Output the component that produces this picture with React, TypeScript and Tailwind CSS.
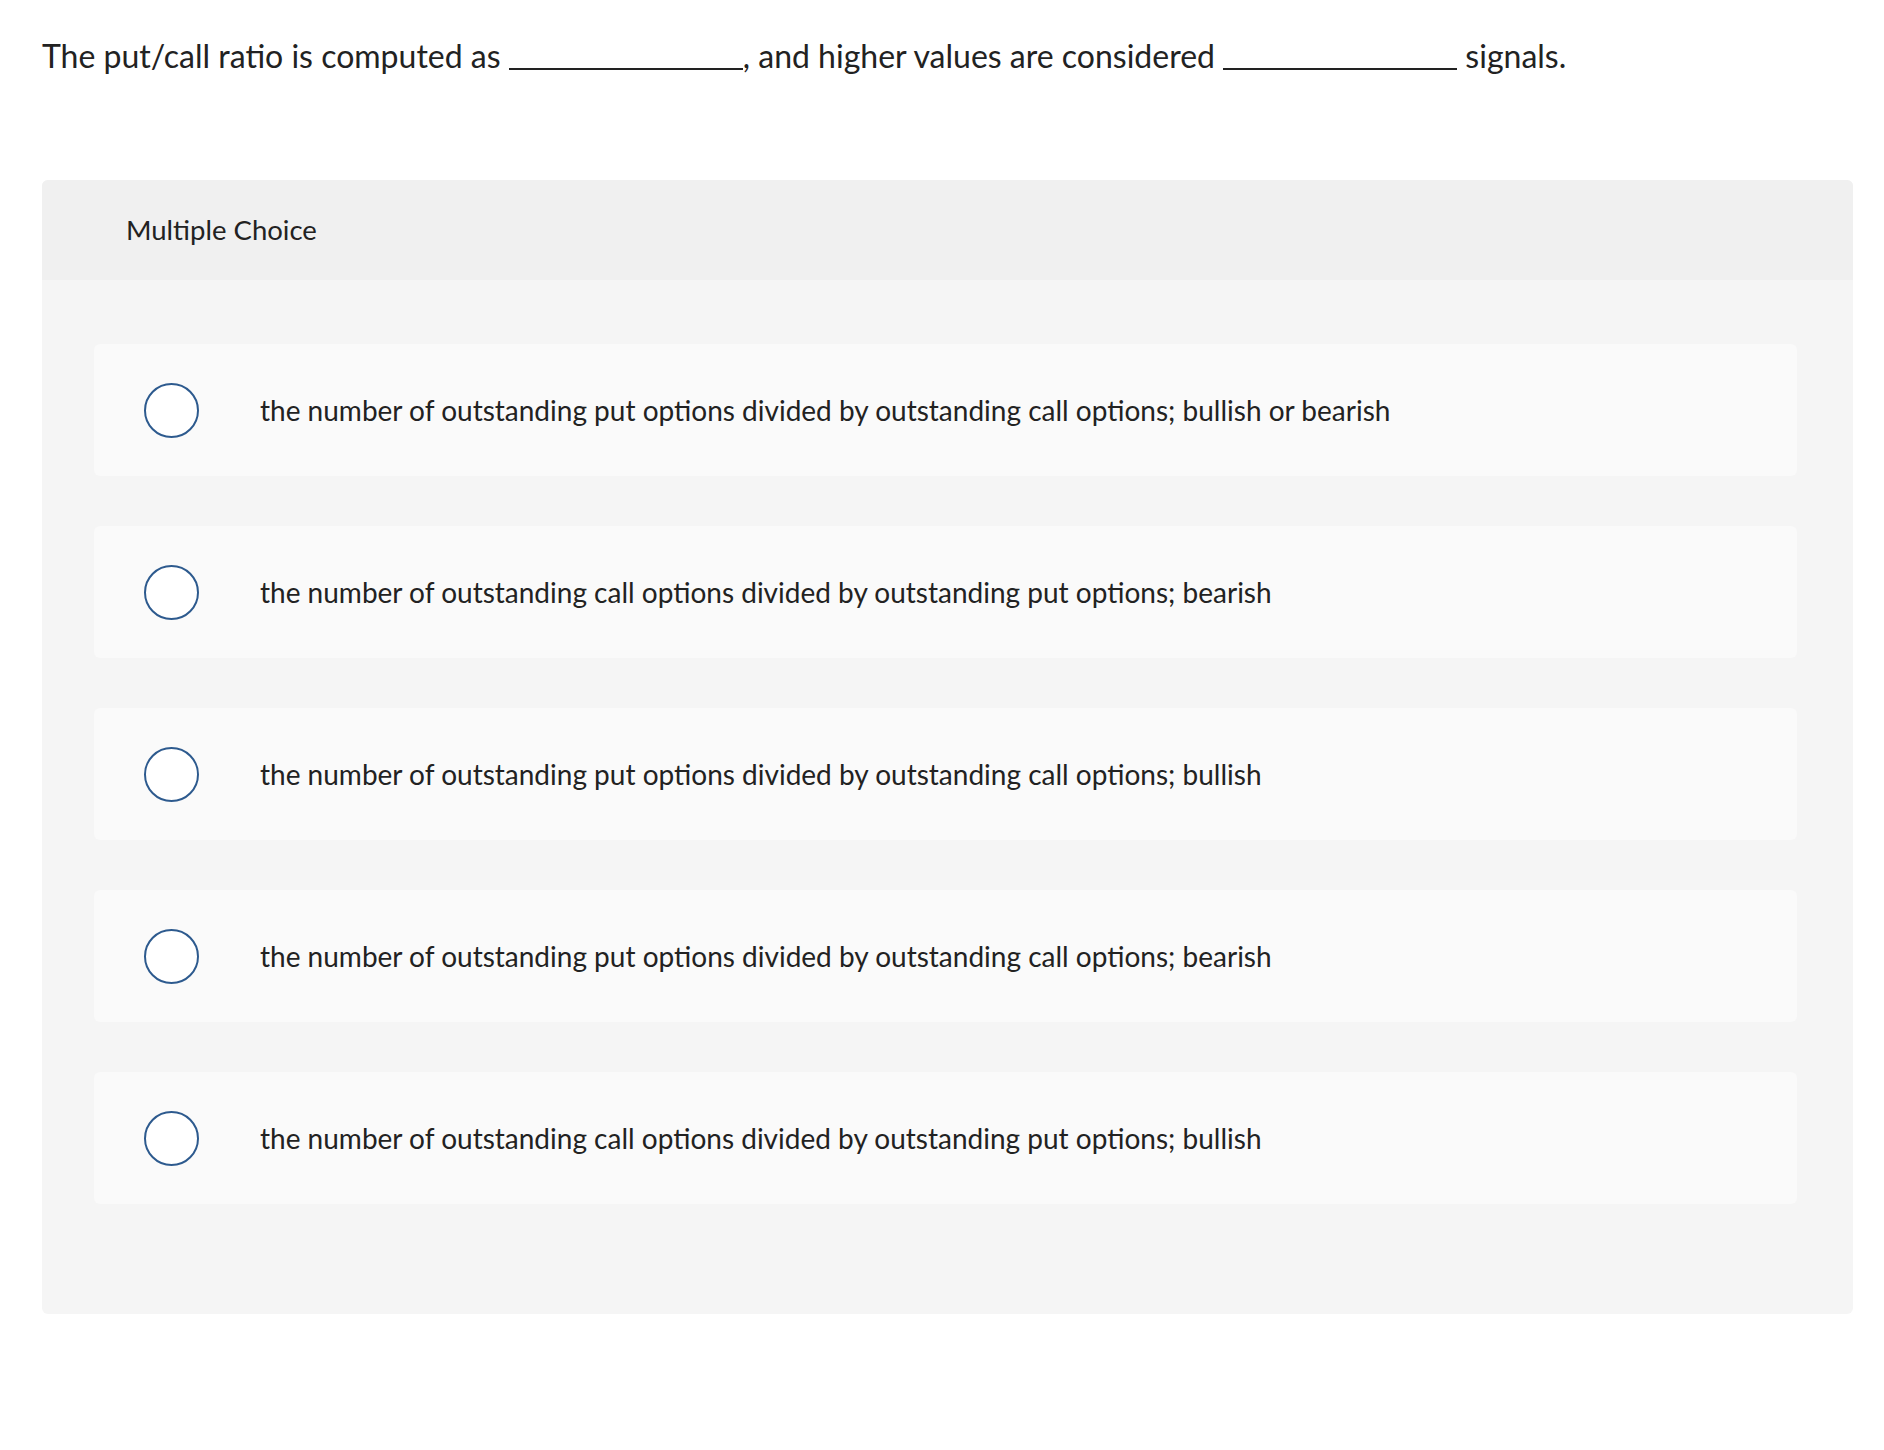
const options = [
    "the number of outstanding put options divided by outstanding call options; bullish or bearish",
    "the number of outstanding call options divided by outstanding put options; bearish",
    "the number of outstanding put options divided by outstanding call options; bullish",
    "the number of outstanding put options divided by outstanding call options; bearish",
    "the number of outstanding call options divided by outstanding put options; bullish",
];

// answer blank, drawn like a run of underscores sitting on the baseline
const Blank: React.FC = () => (
    <span className="inline-block w-[234px] h-[2px] bg-[#222] align-baseline translate-y-[2px]" />
);

const App: React.FC = () => {
    return (
        <div className="min-h-[1450px] bg-white text-[#222] font-['Lato','Liberation_Sans',sans-serif]">
            <div className="pl-[42px] pt-[36px] pr-[31px]">
                <p className="text-[32px] leading-[40px] h-[40px]">
                    The put/call ratio is computed as <Blank />, and higher values are considered <Blank /> signals.
                </p>

                <div className="mt-[104px] rounded-[6px] bg-[#f5f5f5] overflow-hidden">
                    <div className="h-[100px] bg-[#f0f0f0] flex items-center pl-[84px]">
                        <span className="text-[27.5px]">Multiple Choice</span>
                    </div>
                    <ul className="flex flex-col gap-[50px] pt-[64px] pb-[110px] pl-[52px] pr-[56px]">
                        {options.map((opt, i) => (
                            <li key={i} className="h-[132px] rounded-[6px] bg-[#fafafa] flex items-center pl-[50px]">
                                <span className="w-[55px] h-[55px] rounded-full border-2 border-[#2d5a8e] bg-white shrink-0" />
                                <span className="ml-[61px] text-[28px]">{opt}</span>
                            </li>
                        ))}
                    </ul>
                </div>
            </div>
        </div>
    );
};

export default App;
